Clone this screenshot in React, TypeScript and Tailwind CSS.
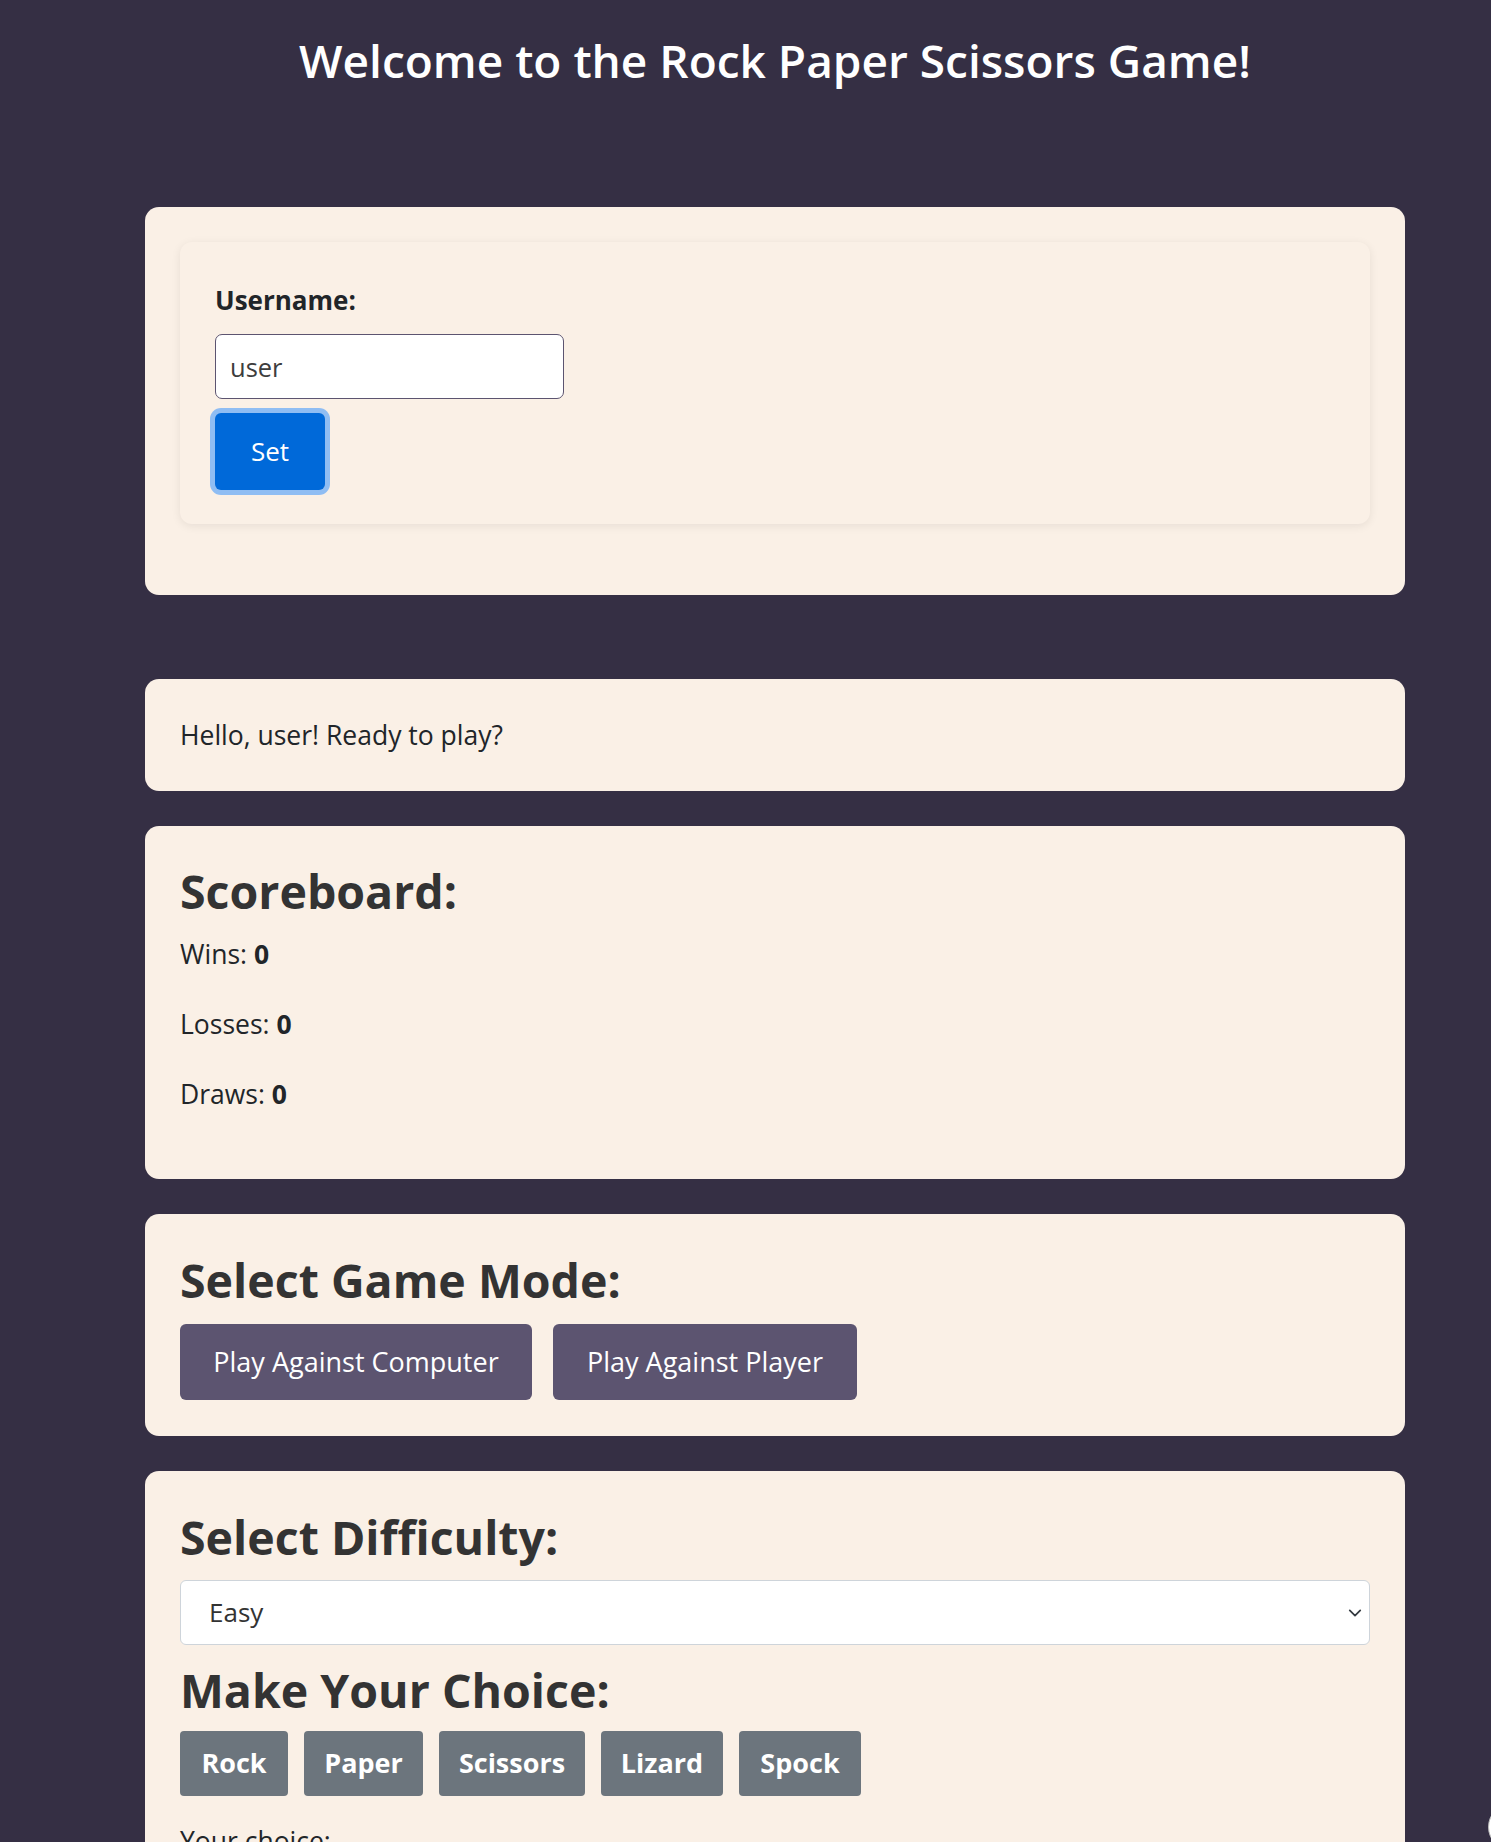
import { useState } from 'react';

const choices = [
  { name: 'Rock', w: 'w-[108px]' },
  { name: 'Paper', w: 'w-[119px]' },
  { name: 'Scissors', w: 'w-[146px]' },
  { name: 'Lizard', w: 'w-[122px]' },
  { name: 'Spock', w: 'w-[122px]' },
];

const Card = ({ children, className = '' }: { children: React.ReactNode; className?: string }) => (
  <div className={`rounded-[14px] bg-[#faf0e6] px-[35px] ${className}`}>{children}</div>
);

const App = () => {
  const [username, setUsername] = useState('user');
  const [difficulty, setDifficulty] = useState('easy');

  return (
    <div className="min-h-screen bg-[#352f44] font-['Open_Sans','Noto_Sans',sans-serif] text-[#212529]">
      <div className="ml-[145px] w-[1260px] pt-[33px] pb-[60px]">
        <h1 className="text-center text-[46px] leading-[55px] font-semibold text-white">
          Welcome to the Rock Paper Scissors Game!
        </h1>

        <Card className="mt-[119px] pt-[35px] pb-[71px]">
          <div className="rounded-[12px] bg-[#faf0e6] px-[35px] pt-[40px] pb-[34px] shadow-[0_2px_10px_rgba(0,0,0,0.08)]">
            <label className="mb-[16px] block text-[26px] leading-[36px] font-bold">Username:</label>
            <input
              value={username}
              onChange={(e) => setUsername(e.target.value)}
              className="block h-[65px] w-[349px] rounded-[7px] border border-[#5c5470] bg-white px-[14px] text-[25.5px] text-[#3d3d3d] outline-none"
            />
            <button className="mt-[14px] block h-[77px] w-[110px] rounded-[6px] bg-[#0069d9] text-[26px] text-white ring-[5px] ring-[#8fbdf3]">
              Set
            </button>
          </div>
        </Card>

        <Card className="mt-[84px] flex h-[112px] items-center">
          <p className="text-[26.5px] leading-[36px]">Hello, {username}! Ready to play?</p>
        </Card>

        <Card className="mt-[35px] pt-[36px] pb-[33px]">
          <h2 className="mb-[16px] text-[46.5px] leading-[58px] font-bold text-[#333333]">Scoreboard:</h2>
          <p className="mb-[34px] text-[26.5px] leading-[36px]">
            Wins: <strong>0</strong>
          </p>
          <p className="mb-[34px] text-[26.5px] leading-[36px]">
            Losses: <strong>0</strong>
          </p>
          <p className="mb-[34px] text-[26.5px] leading-[36px]">
            Draws: <strong>0</strong>
          </p>
        </Card>

        <Card className="mt-[35px] pt-[37px] pb-[36px]">
          <h2 className="mb-[15px] text-[46.5px] leading-[58px] font-bold text-[#333333]">Select Game Mode:</h2>
          <div className="flex gap-[21px]">
            <button className="h-[76px] w-[352px] rounded-[6px] bg-[#5c5470] text-[27px] text-white">
              Play Against Computer
            </button>
            <button className="h-[76px] w-[304px] rounded-[6px] bg-[#5c5470] text-[27px] text-white">
              Play Against Player
            </button>
          </div>
        </Card>

        <Card className="mt-[35px] pt-[37px] pb-[35px]">
          <h2 className="mb-[14px] text-[46.5px] leading-[58px] font-bold text-[#333333]">Select Difficulty:</h2>
          <div className="relative">
            <select
              value={difficulty}
              onChange={(e) => setDifficulty(e.target.value)}
              className="block h-[65px] w-full appearance-none rounded-[6px] border border-[#ced4da] bg-white pl-[28px] text-[26px] text-[#333333] outline-none"
            >
              <option value="easy">Easy</option>
              <option value="medium">Medium</option>
              <option value="hard">Hard</option>
            </select>
            <svg
              className="pointer-events-none absolute top-1/2 right-[8px] -translate-y-1/2"
              width="14"
              height="14"
              viewBox="0 0 16 16"
              fill="none"
              stroke="#343a40"
              strokeWidth="2"
              strokeLinecap="round"
              strokeLinejoin="round"
            >
              <path d="M2 5l6 6 6-6" />
            </svg>
          </div>

          <h2 className="mt-[16px] mb-[12px] text-[46.5px] leading-[58px] font-bold text-[#333333]">Make Your Choice:</h2>
          <div className="flex gap-[16px]">
            {choices.map((c) => (
              <button
                key={c.name}
                className={`h-[65px] ${c.w} rounded-[4px] bg-[#6c757d] text-[27px] font-bold text-white`}
              >
                {c.name}
              </button>
            ))}
          </div>
          <p className="mt-[27px] text-[26.5px] leading-[36px]">Your choice: </p>
          <p className="mt-[10px] text-[26.5px] leading-[36px]">Computer's choice: </p>
        </Card>
      </div>

      <div className="fixed top-[1803px] left-[1488px] h-[48px] w-[48px] rounded-full border border-[#bbbbbb] bg-white" />
    </div>
  );
};

export default App;
